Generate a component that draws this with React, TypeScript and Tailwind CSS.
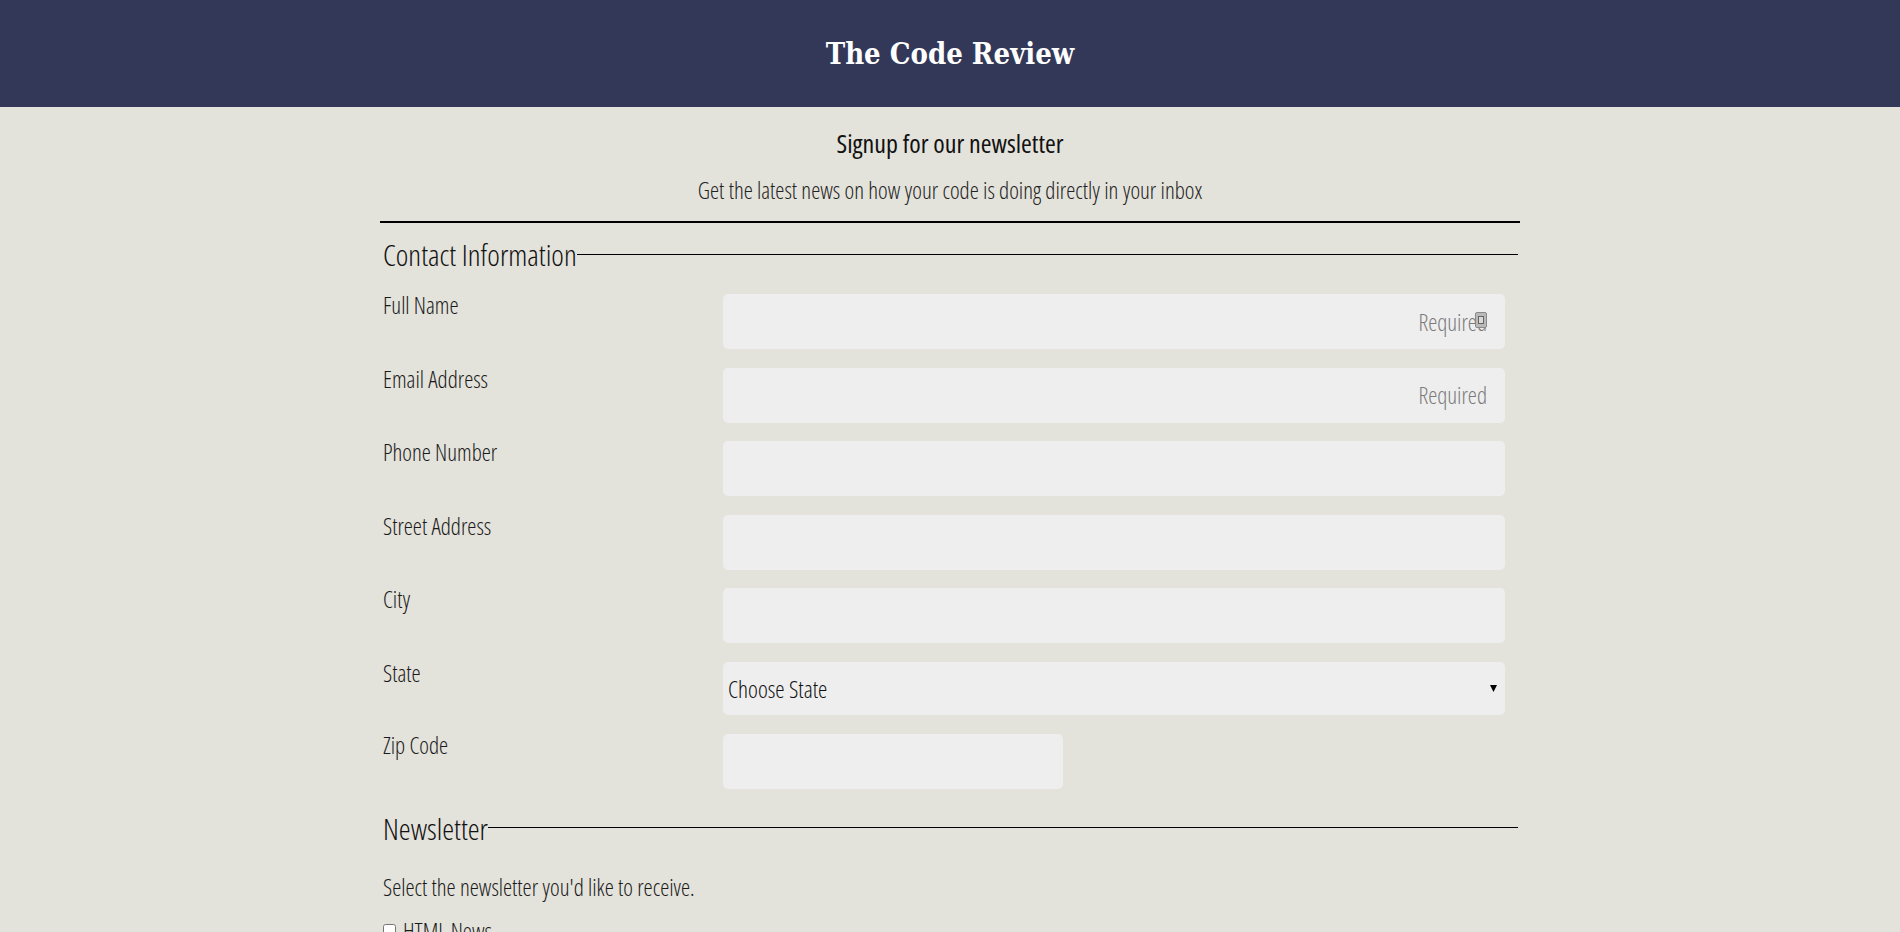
import React from "react";

const FONT = "font-['Open_Sans',sans-serif] [font-stretch:75%]";

function Row({ label, children }: { label: string; children: React.ReactNode }) {
  return (
    <div className="flex items-start">
      <label className="mt-[1px] w-[340px] shrink-0 text-[23px] font-light leading-[20px] text-[#1a1a1a]">{label}</label>
      {children}
    </div>
  );
}

function TextInput({ placeholder, width = "w-[782px]", icon = false }: { placeholder?: string; width?: string; icon?: boolean }) {
  return (
    <div className={`relative ${width} h-[55px]`}>
      <input
        type="text"
        placeholder={placeholder}
        className={`${FONT} h-full w-full rounded-[5px] bg-[#eeeeee] pr-[18px] pl-[6px] text-right text-[23px] font-light text-[#222] outline-none placeholder:text-[#7a7a7a]`}
      />
      {icon && (
        <span className="pointer-events-none absolute right-[18px] top-[18px] flex h-[16px] w-[12px] items-center justify-center rounded-[2px] border border-[#8a8a8a] bg-[#b9b9b9]">
          <span className="h-[8px] w-[6px] border border-[#666] bg-[#d9d9d9]" />
        </span>
      )}
    </div>
  );
}

function Legend({ children }: { children: React.ReactNode }) {
  return (
    <div className="flex items-center">
      <span className="text-[30px] font-light leading-[36px] text-[#111]">{children}</span>
      <div className="mt-[-2px] h-px flex-1 bg-black" />
    </div>
  );
}

export default function App() {
  return (
    <div className={`${FONT} min-h-[932px] bg-[#e3e2db] text-black`}>
      <header className="flex h-[107px] items-center justify-center bg-[#333859] pt-[3px]">
        <h1 className="font-['DejaVu_Serif',serif] text-[29px] font-bold text-white [font-stretch:condensed]">The Code Review</h1>
      </header>
      <main className="mx-auto w-[1140px]">
        <h2 className="mt-[21px] text-center text-[26px] font-medium leading-[30px] text-[#111]">Signup for our newsletter</h2>
        <p className="mt-[17px] text-center text-[23px] font-light leading-[30px] text-[#222]">
          Get the latest news on how your code is doing directly in your inbox
        </p>
        <div className="mt-[16px] h-[2px] w-full bg-black" />
        <section className="pl-[3px] pr-[2px]">
          <div className="mt-[14px]">
            <Legend>Contact Information</Legend>
          </div>
          <div className="mt-[21px] flex flex-col gap-[18.6px]">
            <Row label="Full Name">
              <TextInput placeholder="Required" icon />
            </Row>
            <Row label="Email Address">
              <TextInput placeholder="Required" />
            </Row>
            <Row label="Phone Number">
              <TextInput />
            </Row>
            <Row label="Street Address">
              <TextInput />
            </Row>
            <Row label="City">
              <TextInput />
            </Row>
            <Row label="State">
              <div className="relative h-[53px] w-[782px]">
                <select className={`${FONT} h-full w-full appearance-none rounded-[5px] bg-[#eeeeee] pl-[5px] pt-[2px] text-[23.5px] font-light text-[#111] outline-none`}>
                  <option>Choose State</option>
                </select>
                <svg className="pointer-events-none absolute right-[8px] top-[23px]" width="7" height="7" viewBox="0 0 7 7">
                  <path d="M0 0 H7 L3.5 7 Z" fill="#000" />
                </svg>
              </div>
            </Row>
            <Row label="Zip Code">
              <TextInput width="w-[340px]" />
            </Row>
          </div>
          <div className="mt-[22px]">
            <Legend>Newsletter</Legend>
          </div>
          <p className="mt-[26px] text-[23px] font-light leading-[28px] text-[#1a1a1a]">Select the newsletter you'd like to receive.</p>
          <label className="mt-[16px] flex items-center gap-[7px] text-[23px] font-light leading-[28px] text-[#1a1a1a]">
            <input type="checkbox" className="h-[13px] w-[13px]" />
            HTML News
          </label>
        </section>
      </main>
    </div>
  );
}
